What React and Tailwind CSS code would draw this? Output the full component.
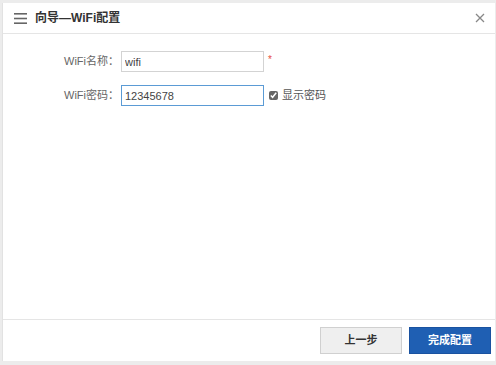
import { useState } from "react";

export default function App() {
  const [name, setName] = useState("wifi");
  const [pwd, setPwd] = useState("12345678");
  const [show, setShow] = useState(true);

  return (
    <div
      className="w-[496px] h-[365px] bg-[#ececec] pt-[3px] pl-[2px] pr-[1px] pb-[4px] text-[#333]"
      style={{ fontFamily: "'Liberation Sans', 'Noto Sans CJK SC', sans-serif" }}
    >
      <div className="h-full bg-white border-l border-[#e2e2e2] flex flex-col">
        <div className="h-[31px] flex items-center border-b border-[#e5e5e5] pl-[11px] pr-[10px]">
          <svg width="13" height="11" viewBox="0 0 13 11" className="mr-[8px]">
            <rect x="0" y="0" width="13" height="1.6" fill="#666" />
            <rect x="0" y="4.7" width="13" height="1.6" fill="#666" />
            <rect x="0" y="9.4" width="13" height="1.6" fill="#666" />
          </svg>
          <span className="text-[12px] font-bold text-[#333]">向导—WiFi配置</span>
          <button className="ml-auto text-[#888]">
            <svg width="10" height="10" viewBox="0 0 10 10">
              <path d="M1 1L9 9M9 1L1 9" stroke="#888" strokeWidth="1.3" />
            </svg>
          </button>
        </div>

        <div className="flex-1 flex flex-col gap-[13px] pt-[17px]">
          <div className="flex items-center">
            <label className="w-[118px] text-right text-[11px] text-[#666] pr-[2px]">WiFi名称：</label>
            <input
              value={name}
              onChange={(e) => setName(e.target.value)}
              className="w-[143px] h-[21px] border border-[#d3d3d3] px-[3px] text-[11px] text-[#444] outline-none"
            />
            <span className="text-[#e74c3c] text-[10px] ml-[4px] -mt-[4px]">*</span>
          </div>
          <div className="flex items-center">
            <label className="w-[118px] text-right text-[11px] text-[#666] pr-[2px]">WiFi密码：</label>
            <div className="w-[143px] h-[21px] border border-[#5b9bd5] flex">
              <input
                type={show ? "text" : "password"}
                value={pwd}
                onChange={(e) => setPwd(e.target.value)}
                className="w-full h-full px-[3px] text-[11px] text-[#444] outline-none"
              />
            </div>
            <label className="flex items-center ml-[5px] text-[11px] text-[#555]">
              <input
                type="checkbox"
                checked={show}
                onChange={(e) => setShow(e.target.checked)}
                className="w-[9px] h-[9px] mr-[4px] accent-[#666]"
              />
              显示密码
            </label>
          </div>
        </div>

        <div className="h-[42px] border-t border-[#e5e5e5] flex items-center justify-end gap-[7px] pr-[4px]">
          <button className="w-[82px] h-[27px] bg-[#efefef] border border-[#d0d0d0] text-[11px] font-bold text-[#333]">
            上一步
          </button>
          <button className="w-[82px] h-[27px] bg-[#1f5fb3] border border-[#1a52a0] text-[11px] font-bold text-white">
            完成配置
          </button>
        </div>
      </div>
    </div>
  );
}
